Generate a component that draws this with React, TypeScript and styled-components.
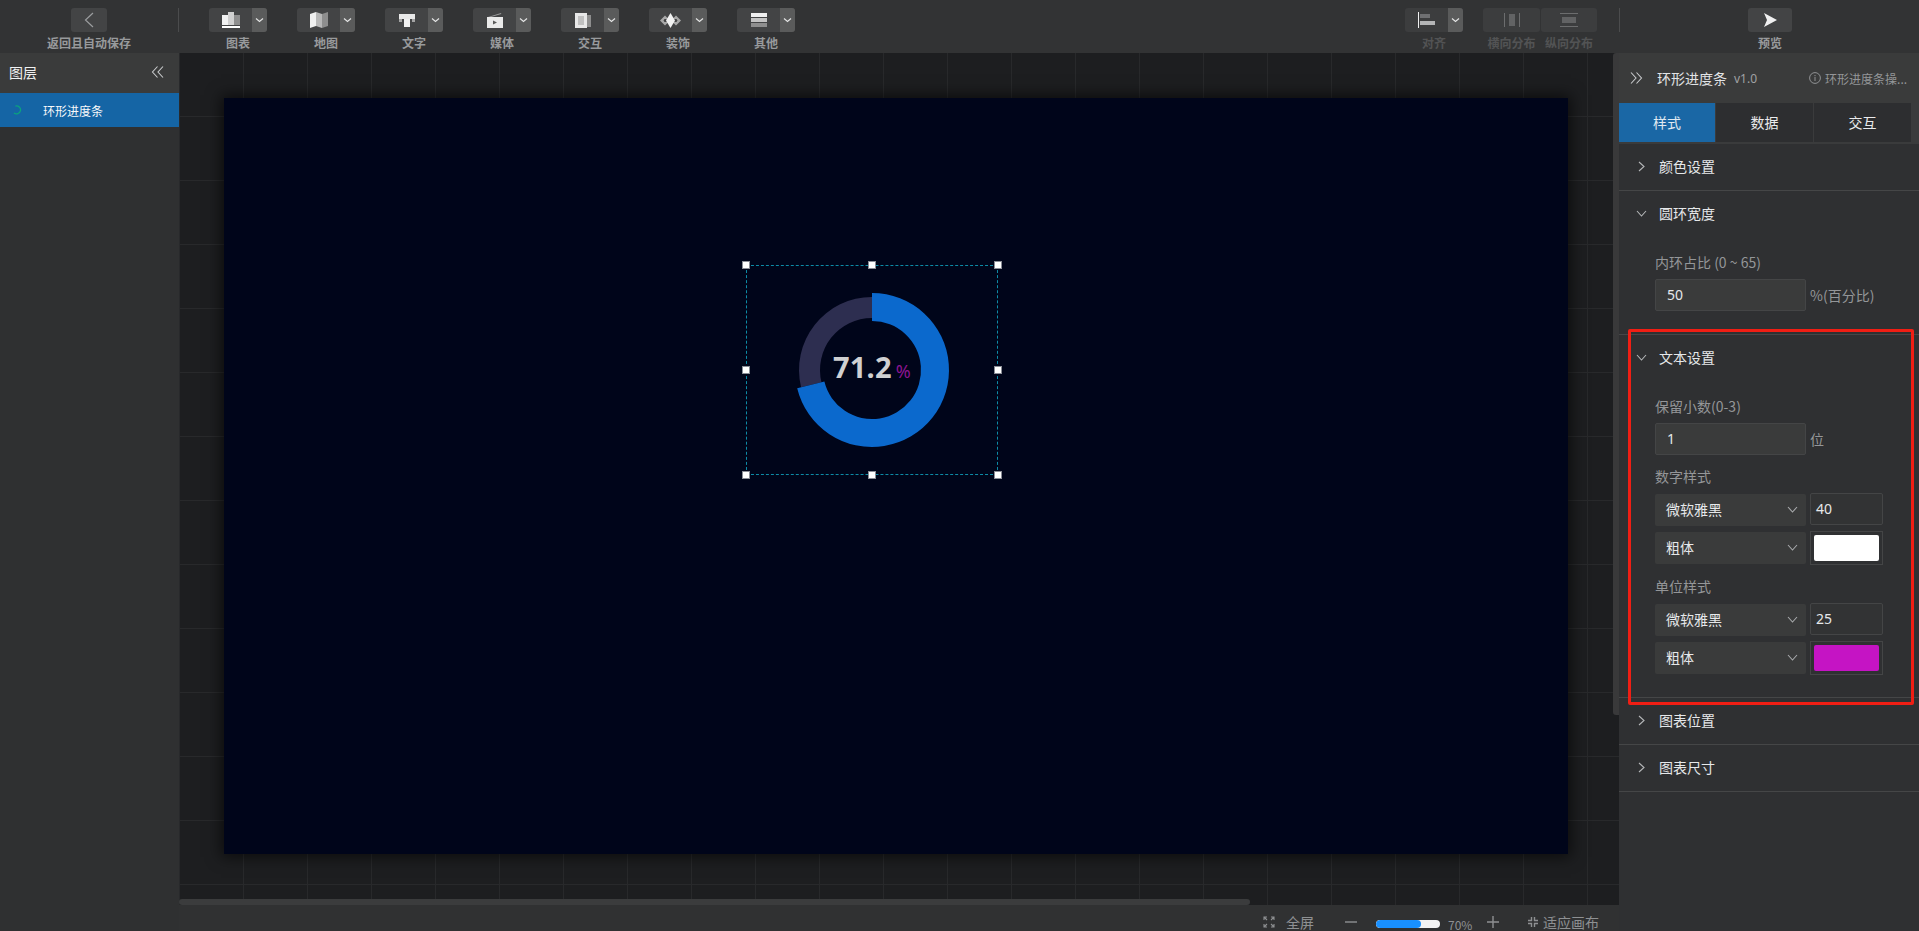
import React from 'react';
import styled, { createGlobalStyle } from 'styled-components';

const Global = createGlobalStyle`
  html, body { margin: 0; padding: 0; background: #1d1e20; overflow: hidden; }
  * { box-sizing: border-box; }
  body { font-family: "Noto Sans CJK SC", "Noto Sans", sans-serif; font-size: 12px; color: #fff; }
`;

const Page = styled.div`
  width: 1919px; height: 931px; display: flex; flex-direction: column; overflow: hidden;
`;
const Toolbar = styled.header`
  height: 53px; flex: none; background: #323334; display: flex; align-items: flex-start; padding-top: 8px; position: relative; z-index: 2;
`;
const ToolItem = styled.div<{ $w: number; $ml?: number }>`
  width: ${p => p.$w}px; margin-left: ${p => p.$ml ?? 0}px; flex: none;
  display: flex; flex-direction: column; align-items: center;
`;
const ToolBtn = styled.div<{ $off?: boolean }>`
  width: 100%; height: 24px; border-radius: 3px; overflow: hidden; display: flex;
  background: ${p => (p.$off ? '#3c3d3e' : '#434445')};
`;
const ToolMain = styled.div`
  flex: 1; display: flex; align-items: center; justify-content: center;
`;
const ToolArrow = styled.div`
  width: 15px; flex: none; background: #5a5b5b; display: flex; align-items: center; justify-content: center;
`;
const ToolLabel = styled.div<{ $off?: boolean }>`
  margin-top: 2px; height: 18px; line-height: 18px; font-size: 12px; font-weight: 700; white-space: nowrap;
  color: ${p => (p.$off ? '#525354' : '#989a9c')};
`;
const Divider = styled.div<{ $ml: number }>`
  width: 1px; height: 24px; flex: none; background: #4b4c4d; margin-left: ${p => p.$ml}px;
`;
const Split = styled.div`
  width: 1px; flex: none;
`;
const Body = styled.div`
  flex: 1; min-height: 0; display: flex;
`;
const LayerPanel = styled.aside`
  width: 179px; flex: none; background: #2f3031; display: flex; flex-direction: column;
`;
const LayerHead = styled.div`
  height: 40px; background: #3a3b3b; display: flex; align-items: center; justify-content: space-between;
  padding: 0 14px 2px 9px; font-size: 14px; line-height: 18px; color: #f0f1f1;
`;
const LayerRow = styled.div`
  height: 34px; background: #1565a5; display: flex; align-items: center; padding-left: 13px; gap: 21px;
  font-size: 12px; color: #f8f9fa;
`;
const CenterCol = styled.main`
  flex: 1; min-width: 0; display: flex; flex-direction: column;
`;
const Canvas = styled.div`
  flex: 1; min-height: 0; position: relative; overflow: hidden; background-color: #1d1e20;
  background-image:
    linear-gradient(to right, #28292b 1px, transparent 1px),
    linear-gradient(to bottom, #28292b 1px, transparent 1px);
  background-size: 64px 64px; background-position: 0 -1px;
  padding: 45px 0 0 45px;
`;
const Artboard = styled.div`
  width: 1344px; height: 756px; background: #00051a; position: relative; box-shadow: 0 0 14px 3px rgba(0,0,0,.6);
`;
const Selection = styled.div`
  position: absolute; left: 522px; top: 167px; width: 252px; height: 210px;
  outline: 1px dashed #0d8ba6; outline-offset: -1px;
  display: flex; align-items: center; justify-content: center;
`;
const Handle = styled.span<{ $x: number; $y: number }>`
  position: absolute; width: 8px; height: 8px; background: #fff; border: 1px solid #8a8d96;
  left: calc(${p => p.$x}% - 4px); top: calc(${p => p.$y}% - 4px);
`;
const Value = styled.div`
  position: absolute; left: 87px; top: 86px; display: flex; align-items: baseline; gap: 4px;
  font-family: "Noto Sans", sans-serif; font-weight: 700; font-size: 29px; line-height: 32px; letter-spacing: 0.2px; color: #cfd0d2; white-space: nowrap;
`;
const Unit = styled.span`
  font-size: 18px; font-weight: 400; color: #8c1591;
`;
const HScroll = styled.div`
  position: absolute; left: 0; bottom: 0; width: 1071px; height: 6px; border-radius: 3px; background: #3b3c3d;
`;
const BottomBar = styled.footer`
  height: 26px; flex: none; background: #303132; display: flex; align-items: center; font-size: 13px; color: #8e9092; padding: 8px 0 0 1084px;
`;
const BottomText = styled.span<{ $ml?: number }>`
  margin-left: ${p => p.$ml ?? 0}px; font-size: 14px; white-space: nowrap; line-height: 18px;
`;
const BottomIcon = styled.span<{ $ml: number }>`
  margin-left: ${p => p.$ml}px; display: flex; flex: none;
`;
const ZoomPct = styled.span`
  margin: 5px 0 0 8px; width: 22px; font-size: 12px; line-height: 14px; white-space: nowrap;
`;
const Zoom = styled.div`
  width: 64px; height: 8px; border-radius: 4px; background: #f2f3f4; overflow: hidden; margin: 4px 0 0 19px; flex: none;
`;
const ZoomFill = styled.div`
  height: 100%; background: #1890ff; border-radius: 4px;
`;
const Inspector = styled.aside`
  width: 300px; flex: none; background: #2f3032; position: relative; display: flex; flex-direction: column;
`;
const VScroll = styled.div`
  position: absolute; left: -6px; top: 0; width: 6px; height: 662px; background: #39393a; border-radius: 3px 0 0 3px;
`;
const InspectorHead = styled.div`
  height: 50px; flex: none; background: #3a3b3b; display: flex; align-items: center; padding-left: 10px; white-space: nowrap;
`;
const InspectorTitle = styled.span`
  font-size: 14px; color: #e2e4e6; margin-left: 14px;
`;
const Version = styled.span`
  font-size: 12px; color: #a0a2a4; margin-left: 7px; font-family: "Noto Sans", sans-serif;
`;
const Hint = styled.span`
  margin-left: 52px; display: flex; align-items: center; gap: 4px; font-size: 12px; color: #949698;
`;
const Tabs = styled.div`
  height: 41px; flex: none; display: flex; gap: 1px; padding-bottom: 2px; background: #3a3b3c;
`;
const Tab = styled.div<{ $on?: boolean }>`
  width: ${p => (p.$on ? 96 : 97)}px; flex: none; display: flex; align-items: center; justify-content: center; padding-bottom: 1px;
  font-size: 14px; color: ${p => (p.$on ? '#e0eaf2' : '#eaebec')};
  background: ${p => (p.$on ? '#1a67a5' : '#2d2e30')};
`;
const TabRest = styled.div`
  flex: 1; background: #3a3b3c;
`;
const SectionWrap = styled.section`
  border-bottom: 1px solid #454647; flex: none;
`;
const SectionHead = styled.div`
  height: 46px; display: flex; align-items: center; padding: 0 0 2px 17px; gap: 12px; font-size: 14px; line-height: 18px; color: #e6e8ea;
`;
const SectionBody = styled.div`
  padding: 16px 0 23px 36px; display: flex; flex-direction: column;
`;
const FieldLabel = styled.div<{ $mt?: number }>`
  height: 20px; line-height: 19px; font-size: 14px; color: #949698; margin-top: ${p => p.$mt ?? 0}px; white-space: nowrap;
`;
const Row = styled.div<{ $mt?: number }>`
  display: flex; align-items: center; gap: 4px; height: 32px; margin-top: ${p => p.$mt ?? 0}px;
`;
const TextInput = styled.div`
  width: 151px; height: 32px; background: #3a3b3b; border: 1px solid #444546; border-radius: 2px;
  padding-left: 11px; line-height: 30px; font-size: 14px; color: #e6e8ea; font-family: "Noto Sans", sans-serif;
`;
const Suffix = styled.span`
  font-size: 14px; color: #949698; white-space: nowrap;
`;
const Select = styled.div`
  width: 151px; height: 32px; background: #3a3b3b; border-radius: 2px; display: flex; align-items: center; justify-content: space-between;
  padding: 0 8px 2px 11px; font-size: 14px; color: #e6e8ea;
`;
const SmallInput = styled.div`
  width: 73px; height: 32px; margin-top: -2px; border: 1px solid #444546; border-radius: 2px; background: #323334;
  padding-left: 5px; line-height: 30px; font-size: 14px; color: #e6e8ea; font-family: "Noto Sans", sans-serif;
`;
const ColorBox = styled.div`
  width: 73px; height: 34px; border: 1px solid #444546; padding: 3px; flex: none;
`;
const Swatch = styled.div<{ $c: string }>`
  width: 100%; height: 100%; background: ${p => p.$c}; border-radius: 2px;
`;
const RedMark = styled.div`
  position: absolute; left: 9px; top: 276px; width: 286px; height: 376px; border: 3px solid #f01e14; border-radius: 2px; pointer-events: none;
`;

const Caret = () => (
  <svg width="9" height="6" viewBox="0 0 9 6"><path d="M1 1.5 4.5 4.5 8 1.5" fill="none" stroke="#e2e3e3" strokeWidth="1.2" /></svg>
);
const Chevron = ({ dir, c = '#b5b7b9' }: { dir: 'right' | 'down'; c?: string }) => (
  <svg width="11" height="11" viewBox="0 0 11 11">
    <path d={dir === 'right' ? 'M3 1 8 5.5 3 10' : 'M1 3 5.5 8 10 3'} fill="none" stroke={c} strokeWidth="1.1" />
  </svg>
);
const Double = ({ dir }: { dir: 'left' | 'right' }) => (
  <svg width="14" height="14" viewBox="0 0 14 14" fill="none" stroke="#c9cbcd" strokeWidth="1.1">
    {dir === 'left'
      ? <path d="M6.5 1.5 1.5 7l5 5.5M12 1.5 7 7l5 5.5" />
      : <path d="M2 1.5 7 7l-5 5.5M7.5 1.5l5 5.5-5 5.5" />}
  </svg>
);
const Icons: Record<string, React.ReactNode> = {
  chart: <svg width="18" height="16" viewBox="0 0 18 16"><rect x="0" y="3" width="6" height="10" fill="#f2f2f2" /><rect x="6" y="0" width="6" height="13" fill="#d0d0d0" /><rect x="12" y="3" width="6" height="10" fill="#8e8e8e" /><rect y="14" width="18" height="2" fill="#fff" /></svg>,
  map: <svg width="18" height="16" viewBox="0 0 18 16"><path d="M0 2 6 0v14l-6 2z" fill="#f0f0f0" /><path d="M6 0l6 2v14l-6-2z" fill="#b8b8b8" /><path d="M12 2l6-2v14l-6 2z" fill="#8e8e8e" /></svg>,
  text: <svg width="16" height="13" viewBox="0 0 16 13"><rect width="16" height="5" fill="#e8e8e8" /><rect y="5" width="3" height="3" fill="#a4a4a4" /><rect x="13" y="5" width="3" height="3" fill="#a4a4a4" /><rect x="5" y="5" width="6" height="8" fill="#f0f0f0" /></svg>,
  media: <svg width="16" height="15" viewBox="0 0 16 15"><path d="M1 4 14 0l.3 1L4 4z" fill="#9a9a9a" /><rect y="4" width="16" height="11" fill="#eaeaea" /><path d="M6 7.5l4 2-4 2z" fill="#5a5a5a" /></svg>,
  inter: <svg width="16" height="15" viewBox="0 0 16 15"><rect x="10" y="2" width="6" height="12" fill="#8e8e8e" /><rect width="12" height="15" fill="#e8e8e8" /><rect x="3" y="3" width="6" height="9" fill="#c0c0c0" /></svg>,
  deco: <svg width="21" height="15" viewBox="0 0 21 15"><path d="M5 2.5 10 7.5 5 12.5 0 7.5zM16 2.5l5 5-5 5-5-5z" fill="#a8a8a8" /><path d="M4.5 6h2l1 1.5-1 1.5h-2l-1-1.5zM14.500 6h2l1 1.500-1 1.500h-2l-1-1.500z" fill="#434445" /><path d="M10.500 0 15 7.500 10.500 15 6 7.500z" fill="#f2f2f2" /></svg>,
  other: <svg width="16" height="14" viewBox="0 0 16 14"><rect width="16" height="4" fill="#f0f0f0" /><rect y="5" width="16" height="4" fill="#c4c4c4" /><rect y="10" width="16" height="4" fill="#8e8e8e" /></svg>,
  align: <svg width="18" height="16" viewBox="0 0 18 16"><rect width="1" height="16" fill="#f0f0f0" /><rect x="2" y="2" width="10" height="4" fill="#6f7072" /><rect x="2" y="9" width="15" height="4" fill="#b4b5b6" /></svg>,
  hdist: <svg width="16" height="14" viewBox="0 0 16 14"><rect x="0" width="1" height="14" fill="#6c6d6e" /><rect x="5" y="1" width="6" height="12" fill="#626364" /><rect x="15" width="1" height="14" fill="#6c6d6e" /></svg>,
  vdist: <svg width="18" height="14" viewBox="0 0 18 14"><rect y="0" width="18" height="1" fill="#6c6d6e" /><rect x="2" y="4" width="14" height="6" fill="#626364" /><rect y="13" width="18" height="1" fill="#6c6d6e" /></svg>,
};

const tools: [string, string][] = [
  ['图表', 'chart'], ['地图', 'map'], ['文字', 'text'], ['媒体', 'media'],
  ['交互', 'inter'], ['装饰', 'deco'], ['其他', 'other'],
];

const Ring = () => {
  const cx = 126, cy = 105;
  const pt = (r: number, deg: number) => {
    const a = (deg * Math.PI) / 180;
    return `${(cx + r * Math.sin(a)).toFixed(2)} ${(cy - r * Math.cos(a)).toFixed(2)}`;
  };
  const end = 360 * 0.712;
  const blue = `M${pt(77, 0)}A77 77 0 1 1 ${pt(77, end)}L${pt(49, end)}A49 49 0 1 0 ${pt(49, 0)}Z`;
  const dim = `M${pt(73, end)}A73 73 0 0 1 ${pt(73, 360)}L${pt(52, 360)}A52 52 0 0 0 ${pt(52, end)}Z`;
  return (
    <svg width="252" height="210" viewBox="0 0 252 210">
      <path d={dim} fill="#2d2e50" />
      <path d={blue} fill="#0b69cd" />
    </svg>
  );
};

const Section = ({ title, open, children }: { title: string; open?: boolean; children?: React.ReactNode }) => (
  <SectionWrap>
    <SectionHead><Chevron dir={open ? 'down' : 'right'} />{title}</SectionHead>
    {children}
  </SectionWrap>
);

const Sel = ({ label }: { label: string }) => (
  <Select>{label}<Chevron dir="down" c="#a8aaac" /></Select>
);

export default function App() {
  return (
    <Page>
      <Global />
      <Toolbar>
        <ToolItem $w={36} $ml={71}>
          <ToolBtn><ToolMain>
            <svg width="12" height="16" viewBox="0 0 12 16"><path d="M10 1 2.500 8l7.500 7" fill="none" stroke="#9a9c9e" strokeWidth="1.2" /></svg>
          </ToolMain></ToolBtn>
          <ToolLabel>返回且自动保存</ToolLabel>
        </ToolItem>
        <Divider $ml={71} />
        {tools.map(([label, icon]) => (
          <ToolItem key={label} $w={58} $ml={30}>
            <ToolBtn>
              <ToolMain>{Icons[icon]}</ToolMain>
              <ToolArrow><Caret /></ToolArrow>
            </ToolBtn>
            <ToolLabel>{label}</ToolLabel>
          </ToolItem>
        ))}
        <ToolItem $w={58} $ml={610}>
          <ToolBtn $off>
            <ToolMain>{Icons.align}</ToolMain>
            <ToolArrow><Caret /></ToolArrow>
          </ToolBtn>
          <ToolLabel $off>对齐</ToolLabel>
        </ToolItem>
        <ToolItem $w={57} $ml={20}>
          <ToolBtn $off><ToolMain>{Icons.hdist}</ToolMain></ToolBtn>
          <ToolLabel $off>横向分布</ToolLabel>
        </ToolItem>
        <Split />
        <ToolItem $w={56}>
          <ToolBtn $off><ToolMain>{Icons.vdist}</ToolMain></ToolBtn>
          <ToolLabel $off>纵向分布</ToolLabel>
        </ToolItem>
        <Divider $ml={22} />
        <ToolItem $w={44} $ml={128}>
          <ToolBtn><ToolMain>
            <svg width="14" height="14" viewBox="0 0 14 14"><path d="M1 0 14 7 1 14 4 7z" fill="#f0f0f0" /></svg>
          </ToolMain></ToolBtn>
          <ToolLabel>预览</ToolLabel>
        </ToolItem>
      </Toolbar>
      <Body>
        <LayerPanel>
          <LayerHead>图层<Double dir="left" /></LayerHead>
          <LayerRow>
            <svg width="9" height="10" viewBox="0 0 9 10"><path d="M2.400 1.100A4 4 0 1 1 1 8" fill="none" stroke="#0ba27f" strokeWidth="1.3" /></svg>
            环形进度条
          </LayerRow>
        </LayerPanel>
        <CenterCol>
          <Canvas>
            <Artboard>
              <Selection>
                <Ring />
                <Value>71.2<Unit>%</Unit></Value>
                {[[0, 0], [50, 0], [100, 0], [0, 50], [100, 50], [0, 100], [50, 100], [100, 100]].map(([x, y]) => (
                  <Handle key={`${x}-${y}`} $x={x} $y={y} />
                ))}
              </Selection>
            </Artboard>
            <HScroll />
          </Canvas>
          <BottomBar>
            <BottomIcon $ml={0}>
              <svg width="12" height="12" viewBox="0 0 12 12" fill="none" stroke="#8e9092" strokeWidth="1.1">
                <path d="M1 4V1h3M8 1h3v3M11 8v3H8M4 11H1V8M1 1l3 3M11 1 8 4M11 11 8 8M1 11l3-3" />
              </svg>
            </BottomIcon>
            <BottomText $ml={11}>全屏</BottomText>
            <BottomIcon $ml={31}>
              <svg width="12" height="12" viewBox="0 0 12 12"><rect y="5.300" width="12" height="1.400" fill="#8e9092" /></svg>
            </BottomIcon>
            <Zoom><ZoomFill style={{ width: '70%' }} /></Zoom>
            <ZoomPct>70%</ZoomPct>
            <BottomIcon $ml={17}>
              <svg width="12" height="12" viewBox="0 0 12 12"><path d="M0 6h12M6 0v12" stroke="#8e9092" strokeWidth="1.4" /></svg>
            </BottomIcon>
            <BottomIcon $ml={29}>
              <svg width="10" height="10" viewBox="0 0 10 10" fill="none" stroke="#8e9092" strokeWidth="1.4">
                <path d="M3.500 0v3.500H0M6.500 0v3.500H10M3.500 10V6.500H0M6.500 10V6.500H10" />
              </svg>
            </BottomIcon>
            <BottomText $ml={5}>适应画布</BottomText>
          </BottomBar>
        </CenterCol>
        <Inspector>
          <VScroll />
          <InspectorHead>
            <Double dir="right" />
            <InspectorTitle>环形进度条</InspectorTitle>
            <Version>v1.0</Version>
            <Hint>
              <svg width="12" height="12" viewBox="0 0 12 12" fill="none" stroke="#909294"><circle cx="6" cy="6" r="5.4" /><path d="M6 5v4M6 3v1.2" /></svg>
              环形进度条操...
            </Hint>
          </InspectorHead>
          <Tabs>
            <Tab $on>样式</Tab>
            <Tab>数据</Tab>
            <Tab>交互</Tab>
            <TabRest />
          </Tabs>
          <Section title="颜色设置" />
          <Section title="圆环宽度" open>
            <SectionBody>
              <FieldLabel>内环占比 (0 ~ 65)</FieldLabel>
              <Row $mt={6}><TextInput>50</TextInput><Suffix>%(百分比)</Suffix></Row>
            </SectionBody>
          </Section>
          <Section title="文本设置" open>
            <SectionBody>
              <FieldLabel>保留小数(0-3)</FieldLabel>
              <Row $mt={6}><TextInput>1</TextInput><Suffix>位</Suffix></Row>
              <FieldLabel $mt={12}>数字样式</FieldLabel>
              <Row $mt={7}><Sel label="微软雅黑" /><SmallInput>40</SmallInput></Row>
              <Row $mt={6}><Sel label="粗体" /><ColorBox><Swatch $c="#ffffff" /></ColorBox></Row>
              <FieldLabel $mt={13}>单位样式</FieldLabel>
              <Row $mt={7}><Sel label="微软雅黑" /><SmallInput>25</SmallInput></Row>
              <Row $mt={6}><Sel label="粗体" /><ColorBox><Swatch $c="#c514c4" /></ColorBox></Row>
            </SectionBody>
          </Section>
          <Section title="图表位置" />
          <Section title="图表尺寸" />
          <RedMark />
        </Inspector>
      </Body>
    </Page>
  );
}
